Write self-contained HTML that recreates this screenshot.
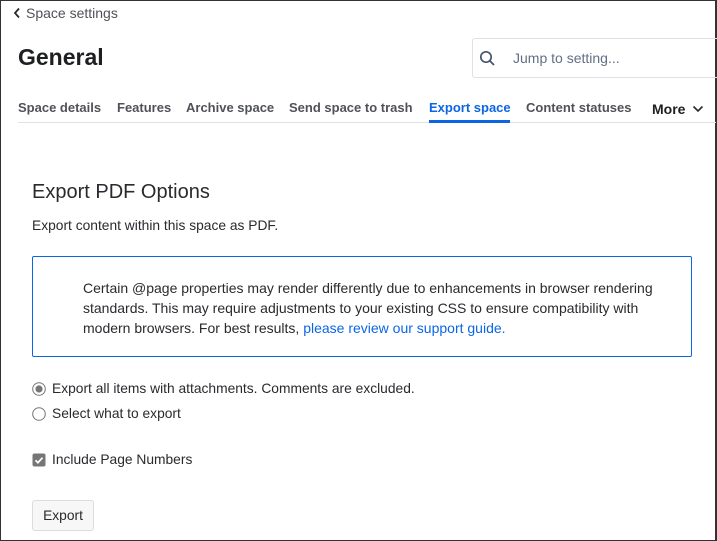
<!DOCTYPE html>
<html><head><style>
*{box-sizing:border-box;margin:0;padding:0}
body{width:717px;height:541px;overflow:hidden;background:#fff;font-family:"Liberation Sans",sans-serif;color:#292a2e;position:relative}
.frame{position:absolute;left:0;top:0;width:717px;height:541px;border:1px solid #333;border-right-width:2px}
.a{position:absolute;white-space:nowrap}
.tab{position:absolute;top:100px;font-size:13px;color:#505258;font-weight:bold;white-space:nowrap}
</style></head><body>
<div class="frame"></div>
<svg class="a" style="left:12px;top:7px" width="10" height="12"><path d="M7 1.5L3 6l4 4.5" stroke="#292a2e" stroke-width="1.8" fill="none"/></svg>
<div class="a" style="left:26px;top:5px;font-size:14px;color:#505258">Space settings</div>
<div class="a" style="left:18px;top:44px;font-size:23px;font-weight:bold;color:#1e1f21">General</div>
<div class="a" style="left:472px;top:38px;width:250px;height:40px;border:1px solid #dfe1e6;border-radius:3px"></div>
<svg class="a" style="left:479px;top:50px" width="18" height="18"><circle cx="7" cy="7" r="5.2" stroke="#44546f" stroke-width="1.7" fill="none"/><path d="M11 11l4 4" stroke="#44546f" stroke-width="1.8"/></svg>
<div class="a" style="left:513px;top:50px;font-size:14px;color:#626f86">Jump to setting...</div>
<div class="tab" style="left:18px">Space details</div>
<div class="tab" style="left:117px">Features</div>
<div class="tab" style="left:186px">Archive space</div>
<div class="tab" style="left:289px">Send space to trash</div>
<div class="tab" style="left:429px;color:#0c66e4">Export space</div>
<div class="tab" style="left:526px">Content statuses</div>
<div class="tab" style="left:652px;top:101px;color:#1e1f21;font-size:14px">More</div>
<svg class="a" style="left:692px;top:105px" width="12" height="8"><path d="M1.5 1.5l4.5 4.5 4.5-4.5" stroke="#292a2e" stroke-width="1.6" fill="none"/></svg>
<div class="a" style="left:18px;top:122px;width:698px;height:1px;background:#dfe1e6"></div>
<div class="a" style="left:429px;top:120px;width:81px;height:3px;background:#0c66e4"></div>
<div class="a" style="left:32px;top:181px;font-size:20px;color:#292a2e">Export PDF Options</div>
<div class="a" style="left:32px;top:218px;font-size:13.8px">Export content within this space as PDF.</div>
<div class="a" style="left:32px;top:256px;width:660px;height:101px;border:1px solid #0c66e4;border-radius:2px"></div>
<div class="a" style="left:83px;top:278px;font-size:14px;line-height:20px">Certain @page properties may render differently due to enhancements in browser rendering<br>standards. This may require adjustments to your existing CSS to ensure compatibility with<br>modern browsers. For best results, <span style="color:#0c66e4">please review our support guide.</span></div>
<svg class="a" style="left:31px;top:381px" width="16" height="16"><circle cx="8" cy="8" r="6.3" fill="#fff" stroke="#767676" stroke-width="1"/><circle cx="8" cy="8" r="3.6" fill="#767676"/></svg>
<div class="a" style="left:52px;top:381px;font-size:13.8px">Export all items with attachments. Comments are excluded.</div>
<svg class="a" style="left:31px;top:406px" width="16" height="16"><circle cx="8" cy="8" r="6.3" fill="#fff" stroke="#767676" stroke-width="1"/></svg>
<div class="a" style="left:52px;top:406px;font-size:13.8px">Select what to export</div>
<svg class="a" style="left:31px;top:452px" width="16" height="16"><rect x="1.5" y="1.5" width="13" height="13" rx="2" fill="#767676"/><path d="M4.5 8.3l2.4 2.4 4.6-5" stroke="#fff" stroke-width="1.8" fill="none"/></svg>
<div class="a" style="left:52px;top:452px;font-size:13.8px">Include Page Numbers</div>
<div class="a" style="left:32px;top:500px;width:62px;height:31px;border:1px solid #dcdcdc;border-radius:3px;background:#f7f7f7;font-size:13.8px;text-align:center;line-height:29px">Export</div>
</body></html>
